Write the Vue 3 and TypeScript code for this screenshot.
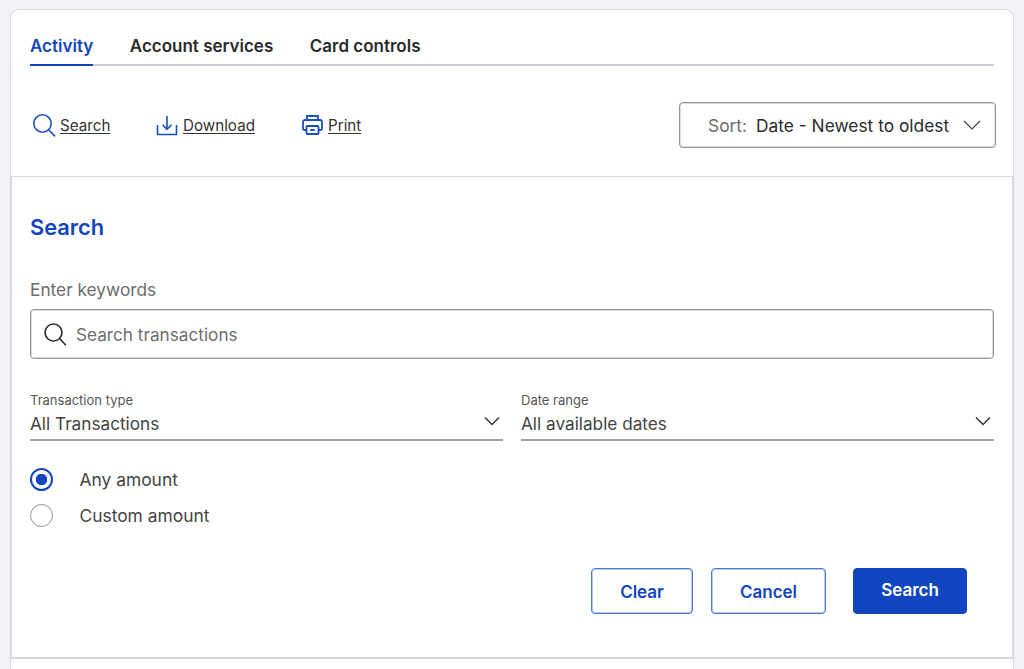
<script setup lang="ts">
import { ref } from 'vue';

const tabs = ['Activity', 'Account services', 'Card controls'];
const activeTab = ref('Activity');
const amount = ref('any');
</script>

<template>
  <div class="page">
    <div class="card">
      <div class="top">
        <nav class="tabs">
          <a
            v-for="tab in tabs"
            :key="tab"
            class="tab"
            :class="{ 'tab--active': tab === activeTab }"
            @click="activeTab = tab"
          >{{ tab }}</a>
        </nav>

        <div class="toolbar">
          <div class="actions">
            <a class="action action--search">
              <svg width="24" height="24" viewBox="0 0 24 24" fill="none" stroke="#1a4fc4" stroke-width="1.6">
                <circle cx="10.5" cy="10.5" r="8.7" />
                <path d="M17 17l6 6.400" />
              </svg>
              <span>Search</span>
            </a>
            <a class="action action--download">
              <svg width="22" height="22" viewBox="0 0 22 22" fill="none" stroke="#1a4fc4" stroke-width="1.6">
                <path d="M1.500 11v9.500h19V11" />
                <path d="M11 2v13M6.500 10.800L11 15.300l4.500-4.500" />
              </svg>
              <span>Download</span>
            </a>
            <a class="action action--print">
              <svg width="22" height="22" viewBox="0 0 22 22" fill="none" stroke="#1a4fc4" stroke-width="1.8">
                <path d="M5 6V2h11v4" />
                <path d="M4.500 16H2.500A1.500 1.500 0 0 1 1 14.500V8a2 2 0 0 1 2-2h15a2 2 0 0 1 2 2v6.500a1.500 1.500 0 0 1-1.500 1.500h-2" />
                <rect x="4.500" y="12" width="12" height="8" rx="1" />
                <path d="M8 16h5" />
              </svg>
              <span>Print</span>
            </a>
          </div>

          <div class="sort">
            <span class="sort-label">Sort:</span>
            <span class="sort-value">Date - Newest to oldest</span>
            <svg class="sort-caret" width="18" height="10" viewBox="0 0 18 10" fill="none" stroke="#444" stroke-width="1.200">
              <path d="M1 1l8 8 8-8" />
            </svg>
          </div>
        </div>
      </div>

      <section class="panel">
        <h2 class="title">Search</h2>

        <label class="keywords-label">Enter keywords</label>
        <div class="keywords">
          <svg width="24" height="24" viewBox="0 0 24 24" fill="none" stroke="#2b2b2b" stroke-width="1.600">
            <circle cx="10.500" cy="10.500" r="8.500" />
            <path d="M16.800 16.800l6 6.400" />
          </svg>
          <span class="placeholder">Search transactions</span>
        </div>

        <div class="selects">
          <div class="select">
            <div class="select-label">Transaction type</div>
            <div class="select-value">
              <span>All Transactions</span>
              <svg width="16" height="10" viewBox="0 0 16 10" fill="none" stroke="#333" stroke-width="1.500">
                <path d="M1 1.500l7 7 7-7" />
              </svg>
            </div>
          </div>
          <div class="select">
            <div class="select-label">Date range</div>
            <div class="select-value">
              <span>All available dates</span>
              <svg width="16" height="10" viewBox="0 0 16 10" fill="none" stroke="#333" stroke-width="1.500">
                <path d="M1 1.500l7 7 7-7" />
              </svg>
            </div>
          </div>
        </div>

        <div class="radios">
          <div class="radio-row" @click="amount = 'any'">
            <span class="radio" :class="{ 'radio--on': amount === 'any' }"></span>
            <span>Any amount</span>
          </div>
          <div class="radio-row" @click="amount = 'custom'">
            <span class="radio" :class="{ 'radio--on': amount === 'custom' }"></span>
            <span>Custom amount</span>
          </div>
        </div>

        <div class="buttons">
          <button class="btn btn--clear">Clear</button>
          <button class="btn btn--cancel">Cancel</button>
          <button class="btn btn--primary">Search</button>
        </div>
      </section>
    </div>
  </div>
</template>

<style>
html,
body {
  margin: 0;
  background: #f1f2f5;
  overflow: hidden;
}
</style>

<style scoped>
.page {
  height: 669px;
  overflow: hidden;
  box-sizing: border-box;
  padding: 9px 10px 0;
  font-family: Inter, 'Liberation Sans', sans-serif;
  color: #2b2b2b;
}

.card {
  background: #fff;
  border: 1px solid #d9d9dd;
  border-bottom: 0;
  border-radius: 9px 9px 0 0;
  height: 700px;
}

.top {
  padding: 0 19px;
  height: 166px;
  box-sizing: border-box;
}

.tabs {
  display: flex;
  gap: 36.500px;
  height: 56px;
  box-sizing: border-box;
  padding-top: 26px;
  border-bottom: 2px solid #ccced6;
}

.tab {
  box-sizing: border-box;
  font-size: 17px;
  line-height: 21px;
  font-weight: 600;
  color: #2b2b2b;
  height: 30px;
}

.tab--active {
  color: #1146c0;
  border-bottom: 2px solid #1146c0;
}

.toolbar {
  display: flex;
  justify-content: space-between;
  align-items: center;
  margin-top: 36px;
  margin-right: -2px;
}

.actions {
  display: flex;
  padding-left: 2px;
}

.action {
  display: flex;
  align-items: center;
  gap: 4px;
  font-size: 15.200px;
  color: #333;
}

.action span {
  text-decoration: underline;
  text-underline-offset: 2px;
}

.action--search {
  width: 124px;
}

.action--download {
  gap: 5px;
  width: 146px;
}

.sort {
  display: flex;
  align-items: center;
  width: 317px;
  height: 46px;
  margin-left: -1px;
  box-sizing: border-box;
  border: 1px solid #959597;
  box-shadow: inset 0 0 0 1px rgba(149, 149, 151, 0.35);
  border-radius: 4px;
  padding-left: 28px;
  font-size: 17.350px;
}

.sort-label {
  color: #6b6b6b;
  margin-right: 9px;
}

.sort-value {
  color: #2b2b2b;
}

.sort-caret {
  margin-left: 14px;
}

.panel {
  border: 1px solid #d9d9dd;
  border-bottom-width: 2px;
  border-right-width: 2px;
  margin-right: -1px;
  height: 483px;
  box-sizing: border-box;
  padding: 36px 18px 0 18px;
}

.title {
  margin: 0;
  font-size: 21.800px;
  line-height: 28px;
  font-weight: 600;
  color: #1146c0;
}

.keywords-label {
  display: block;
  margin-top: 38px;
  font-size: 17.300px;
  line-height: 22px;
  color: #6b6b6b;
}

.keywords {
  display: flex;
  align-items: center;
  gap: 9px;
  margin-top: 8px;
  height: 50px;
  box-sizing: border-box;
  border: 1px solid #959597;
  box-shadow: inset 0 0 0 1px rgba(149, 149, 151, 0.35);
  border-radius: 4px;
  padding-left: 12px;
}

.placeholder {
  font-size: 17.200px;
  color: #6f6f6f;
}

.selects {
  display: grid;
  grid-template-columns: 1fr 1fr;
  gap: 18px;
  margin-top: 33px;
}

.select-label {
  font-size: 13px;
  line-height: 16px;
  color: #555;
}

.select-value {
  display: flex;
  justify-content: space-between;
  align-items: center;
  height: 33px;
  box-sizing: border-box;
  border-bottom: 2px solid #a4a4a6;
  font-size: 17.200px;
  color: #444;
}

.select-value svg {
  margin: 0 3px 5px 0;
}

.radios {
  margin-top: 20px;
}

.radio-row {
  display: flex;
  align-items: center;
  gap: 26.500px;
  height: 36px;
  font-size: 17.400px;
  color: #444;
}

.radio {
  width: 23px;
  height: 23px;
  box-sizing: border-box;
  border: 1px solid #8f8f8f;
  border-radius: 50%;
}

.radio--on {
  border: 2px solid #1146c0;
  background: radial-gradient(circle, #1146c0 0 5.500px, #fff 6px);
}

.buttons {
  display: flex;
  justify-content: flex-end;
  margin-top: 35px;
  padding-right: 27px;
}

.btn {
  height: 46px;
  box-sizing: border-box;
  border: 1px solid #4a78d6;
  box-shadow: inset 0 0 0 1px rgba(74, 120, 214, 0.4);
  border-radius: 4px;
  background: #fff;
  color: #1146c0;
  font-family: inherit;
  font-size: 17px;
  font-weight: 600;
  padding: 1px 0 0;
}

.btn--clear {
  width: 102px;
  margin-right: 18px;
}

.btn--cancel {
  width: 115px;
  margin-right: 27px;
}

.btn--primary {
  width: 114px;
  border-color: #1146c0;
  background: #1146c0;
  box-shadow: none;
  color: #fff;
  padding: 0 0 2px;
}
</style>
